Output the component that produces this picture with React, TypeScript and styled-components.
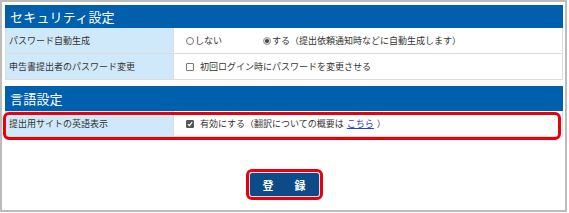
import React from 'react';
import styled, { createGlobalStyle } from 'styled-components';

const GlobalStyle = createGlobalStyle`
    html, body {
        margin: 0;
        padding: 0;
        background: #fff;
    }
    body {
        font-family: "Noto Sans CJK JP", "Noto Sans", sans-serif;
        color: #333;
    }
`;

const Frame = styled.div`
    width: 567px;
    height: 212px;
    box-sizing: border-box;
    border: 2px solid #bcbcbc;
    padding: 3px 2px 0 3px;
    display: flex;
    flex-direction: column;
`;

const Section = styled.div`
    position: relative;
    margin-bottom: 6px;
`;

const SectionHeader = styled.div<{ $h?: number }>`
    height: ${ p => p.$h ?? 23 }px;
    background: #0060ad;
    color: #fff;
    font-size: 13px;
    padding-left: 5px;
    display: flex;
    align-items: center;
    letter-spacing: 0.2px;
`;

const Table = styled.div`
    border: 1px solid #dcdcdc;
    border-top: none;
`;

const Row = styled.div<{ $first?: boolean }>`
    display: grid;
    grid-template-columns: 168px 1fr;
    height: 25px;
    border-top: ${ p => p.$first ? 'none' : '1px solid #dcdcdc' };
`;

const Label = styled.div`
    background: #cfe9fb;
    border-right: 1px solid #dcdcdc;
    padding-left: 3px;
    font-size: 9px;
    display: flex;
    align-items: center;
`;

const Value = styled.div`
    padding-left: 12px;
    font-size: 9px;
    display: flex;
    align-items: center;
`;

const Option = styled.span<{ $gap?: number }>`
    display: inline-flex;
    align-items: center;
    margin-right: ${ p => p.$gap ?? 0 }px;
`;

const Radio = styled.span<{ $on?: boolean }>`
    width: 8px;
    height: 8px;
    border-radius: 50%;
    border: 1px solid ${ p => p.$on ? '#999' : '#777' };
    background: ${ p => p.$on ? '#ddd' : '#fff' };
    box-sizing: border-box;
    margin-right: 1px;
    display: inline-flex;
    align-items: center;
    justify-content: center;
    &::after {
        content: '';
        display: ${ p => p.$on ? 'block' : 'none' };
        width: 4px;
        height: 4px;
        border-radius: 50%;
        background: #444;
    }
`;

const Box = styled.span<{ $on?: boolean }>`
    width: 8px;
    height: 8px;
    box-sizing: border-box;
    border: 1px solid ${ p => p.$on ? '#555' : '#777' };
    border-radius: 1px;
    background: ${ p => p.$on ? '#555' : '#fff' };
    margin-right: 6px;
    display: inline-flex;
    align-items: center;
    justify-content: center;
`;

const Link = styled.a`
    color: #2240d0;
    text-decoration: underline;
    margin: 0 3px;
`;

const Highlight = styled.div`
    position: absolute;
    left: -2px;
    right: 2px;
    bottom: -3px;
    height: 28px;
    border: 3px solid #e8000b;
    border-radius: 6px;
    box-sizing: border-box;
    pointer-events: none;
`;

const Actions = styled.div`
    display: flex;
    justify-content: center;
    margin-top: 26px;
`;

const Ring = styled.div`
    border: 3px solid #e8000b;
    border-radius: 6px;
    display: flex;
`;

const Submit = styled.button`
    width: 71px;
    height: 25px;
    border: 1px solid #d8e2ec;
    border-radius: 3px;
    background: #0c4b88;
    color: #fff;
    font-family: "Noto Sans CJK JP", sans-serif;
    font-weight: 700;
    font-size: 11px;
    letter-spacing: 5px;
    padding: 0 0 0 5px;
    cursor: pointer;
`;

const Check = () => (
    <svg width="6" height="6" viewBox="0 0 6 6">
        <path d="M0.8 3.1 L2.4 4.6 L5.2 1.2" stroke="#fff" strokeWidth="1.2" fill="none" />
    </svg>
);

export default function App() {
    return (
        <>
            <GlobalStyle />
            <Frame>
                <Section>
                    <SectionHeader>セキュリティ設定</SectionHeader>
                    <Table>
                        <Row $first>
                            <Label>パスワード自動生成</Label>
                            <Value>
                                <Option $gap={ 41 }><Radio />しない</Option>
                                <Option><Radio $on />する（提出依頼通知時などに自動生成します）</Option>
                            </Value>
                        </Row>
                        <Row>
                            <Label>申告書提出者のパスワード変更</Label>
                            <Value>
                                <Option><Box />初回ログイン時にパスワードを変更させる</Option>
                            </Value>
                        </Row>
                    </Table>
                </Section>
                <Section>
                    <SectionHeader $h={ 25 }>言語設定</SectionHeader>
                    <Table>
                        <Row $first>
                            <Label>提出用サイトの英語表示</Label>
                            <Value>
                                <Option><Box $on><Check /></Box>有効にする（翻訳についての概要は<Link href="#">こちら</Link>）</Option>
                            </Value>
                        </Row>
                    </Table>
                    <Highlight />
                </Section>
                <Actions>
                    <Ring>
                        <Submit>登　録</Submit>
                    </Ring>
                </Actions>
            </Frame>
        </>
    );
}
